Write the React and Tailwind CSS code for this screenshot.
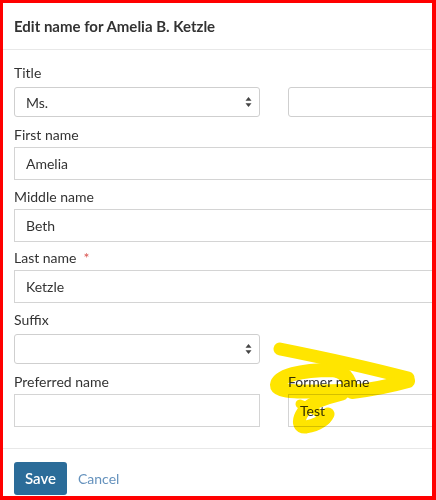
import React from "react";

function SelectArrows() {
  return (
    <svg width="7" height="11" viewBox="0 0 7 11" className="absolute right-[7px] top-1/2 -translate-y-1/2">
      <path d="M3.5 0.5 L6.5 4.2 L0.5 4.2 Z" fill="#444" />
      <path d="M3.5 10.5 L6.5 6.8 L0.5 6.8 Z" fill="#444" />
    </svg>
  );
}

function SelectBox({ value }) {
  return (
    <div className="relative mt-1 h-[30px] w-full rounded-[3px] border border-[#cfcfcf] bg-white flex items-center pl-[11px] text-[14px] text-[#333]">
      {value}
      <SelectArrows />
    </div>
  );
}

function InputBox({ value }) {
  return (
    <div className="mt-[2px] h-[33px] w-full border border-[#d4d4d4] bg-white flex items-center pl-[11px] text-[14px] text-[#333]">
      {value}
    </div>
  );
}

function Label({ children, required }) {
  return (
    <div className="h-5 leading-5 text-[14px] text-[#333] flex items-center">
      {children}
      {required && <span className="ml-[7px] text-[#d9534f] text-[14px]">*</span>}
    </div>
  );
}

export default function App() {
  return (
    <div
      className="relative w-[436px] h-[500px] overflow-hidden bg-white border-solid border-[#ff0000] border-t-[3px] border-l-[3px] border-r-[4px] border-b-[4px]"
      style={{ fontFamily: "Lato, 'Open Sans', sans-serif" }}
    >
      <div className="w-[560px]">
        <div className="h-[47px] flex items-center px-[11px] border-b border-[#e8e8e8] text-[15px] font-bold text-[#333]">
          Edit name for Amelia B. Ketzle
        </div>
        <div className="px-[11px] pt-[13px] pb-[21px] border-b border-[#e8e8e8]">
          <div className="grid grid-cols-[246px_246px] gap-x-[28px]">
            <div className="h-[62px]">
              <Label>Title</Label>
              <SelectBox value="Ms." />
            </div>
            <div className="h-[62px]">
              <div className="h-5" />
              <div className="mt-1 h-[30px] w-full rounded-[3px] border border-[#cfcfcf] bg-white" />
            </div>
          </div>
          <div className="w-[518px]">
            <div className="h-[62px]">
              <Label>First name</Label>
              <InputBox value="Amelia" />
            </div>
            <div className="h-[61px]">
              <Label>Middle name</Label>
              <InputBox value="Beth" />
            </div>
            <div className="h-[62px]">
              <Label required>Last name</Label>
              <InputBox value="Ketzle" />
            </div>
          </div>
          <div className="grid grid-cols-[246px_246px] gap-x-[28px]">
            <div className="h-[62px]">
              <Label>Suffix</Label>
              <SelectBox value="" />
            </div>
            <div />
          </div>
          <div className="grid grid-cols-[246px_246px] gap-x-[28px]">
            <div>
              <Label>Preferred name</Label>
              <InputBox value="" />
            </div>
            <div>
              <Label>Former name</Label>
              <InputBox value="Test" />
            </div>
          </div>
        </div>
        <div className="px-[11px] pt-[13px] flex items-center">
          <button className="h-[33px] w-[53px] rounded-[3px] bg-[#2b6c99] text-white text-[15px] font-semibold flex items-center justify-center">
            Save
          </button>
          <span className="ml-[11px] text-[14px] text-[#6592bd]">Cancel</span>
        </div>
      </div>
      <svg
        className="absolute left-[-3px] top-[-3px] pointer-events-none mix-blend-multiply"
        width="436"
        height="500"
        viewBox="0 0 436 500"
      >
        <g fill="none" stroke="#ffe500" strokeLinecap="round" strokeLinejoin="round">
          <path strokeWidth="13" d="M280 349 C 320 357, 370 368, 408 378" />
          <path strokeWidth="14" d="M408 381 C 390 386, 368 390, 352 392 C 350 380, 345 371, 332 370 C 300 370, 278 376, 277 385 C 277 393, 305 392, 345 391" />
          <path strokeWidth="13" d="M342 394 C 322 399, 308 404, 303 412 C 297 421, 299 428, 306 427 C 316 425, 324 422, 328 414" />
          <path strokeWidth="9" d="M300 404 C 312 408, 320 412, 326 420" />
        </g>
      </svg>
    </div>
  );
}
